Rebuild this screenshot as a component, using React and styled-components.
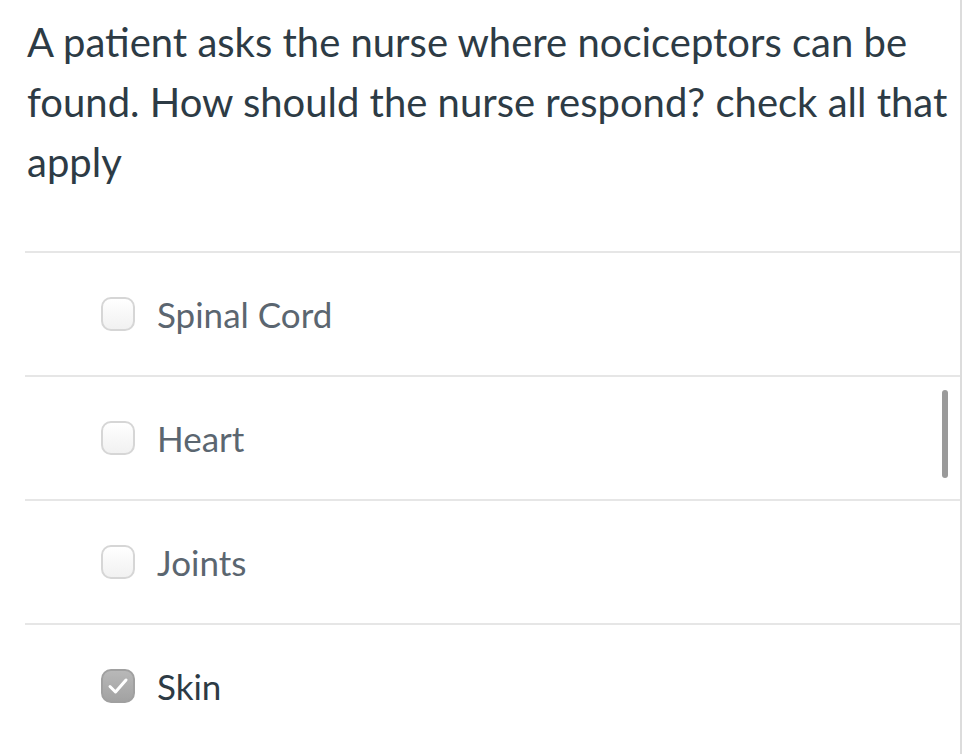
import React from "react";
import styled, { createGlobalStyle } from "styled-components";

const Global = createGlobalStyle`
  html, body {
    margin: 0;
    padding: 0;
    background: #fff;
  }
  body {
    font-family: Lato, "Noto Sans", sans-serif;
  }
`;

const answers = [
  { label: "Spinal Cord", checked: false },
  { label: "Heart", checked: false },
  { label: "Joints", checked: false },
  { label: "Skin", checked: true },
];

const Page = () => {
  return (
    <Frame>
      <Global />
      <Question>
        A patient asks the nurse where nociceptors can be found. How should the
        nurse respond? check all that apply
      </Question>
      <AnswerList>
        {answers.map((a) => (
          <Answer key={a.label}>
            <Box checked={a.checked}>
              {a.checked && (
                <svg width="24" height="20" viewBox="0 0 24 20">
                  <path
                    d="M4 10.5 L9.5 16 L20 4"
                    fill="none"
                    stroke="#fff"
                    strokeWidth="3"
                    strokeLinecap="round"
                    strokeLinejoin="round"
                  />
                </svg>
              )}
            </Box>
            <Label checked={a.checked}>{a.label}</Label>
          </Answer>
        ))}
      </AnswerList>
      <Thumb />
    </Frame>
  );
};

export default Page;

let Frame = styled.div`
  position: relative;
  width: 935px;
  height: 754px;
  padding-left: 25px;
  border-right: 2px solid #dcdcdc;
  overflow: hidden;
`;

let Question = styled.p`
  margin: 0;
  padding: 12px 0 0 2px;
  font-size: 40px;
  line-height: 60px;
  color: #2d3b45;
  letter-spacing: 0;
`;

let AnswerList = styled.div`
  margin-top: 59px;
`;

let Answer = styled.div`
  display: flex;
  align-items: center;
  height: 122px;
  border-top: 2px solid #e6e6e6;
  padding-left: 76px;
`;

let Box = styled.span`
  display: flex;
  align-items: center;
  justify-content: center;
  box-sizing: border-box;
  width: 34px;
  height: 34px;
  border-radius: 10px;
  border: 2px solid ${(p) => (p.checked ? "#a0a0a0" : "#d6d6d6")};
  background: ${(p) =>
    p.checked
      ? "linear-gradient(#b8b8b8, #a2a2a2)"
      : "linear-gradient(#ffffff, #f1f1f1)"};
  margin-right: 22px;
`;

let Label = styled.span`
  font-size: 35px;
  color: ${(p) => (p.checked ? "#2d3b45" : "#5b6670")};
`;

let Thumb = styled.div`
  position: absolute;
  right: 12px;
  top: 390px;
  width: 6px;
  height: 88px;
  border-radius: 3px;
  background: #9a9a9a;
`;
